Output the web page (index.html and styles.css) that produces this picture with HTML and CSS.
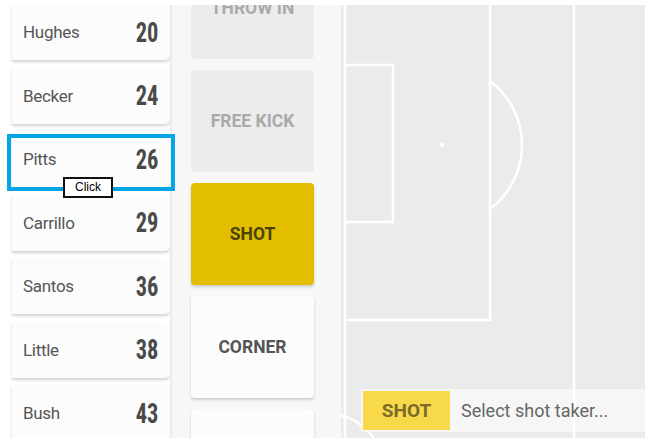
FILE: index.html
```html
<!DOCTYPE html>
<html lang="en">
<head>
    <meta charset="UTF-8">
    <meta name="viewport" content="width=device-width, initial-scale=1.0">
    <title>Shot taker</title>

    <link rel="stylesheet" href="styles.css">
</head>
<body>
    <div class="topbar"></div>
    <div class="main">
        <div class="players">
            <div class="player"><span class="name">Hughes</span><span class="num">20</span></div>
            <div class="player"><span class="name">Becker</span><span class="num">24</span></div>
            <div class="player"><span class="name">Pitts</span><span class="num">26</span></div>
            <div class="player"><span class="name">Carrillo</span><span class="num">29</span></div>
            <div class="player"><span class="name">Santos</span><span class="num">36</span></div>
            <div class="player"><span class="name">Little</span><span class="num">38</span></div>
            <div class="player"><span class="name">Bush</span><span class="num">43</span></div>
        </div>

        <div class="actions">
            <div class="action off">THROW IN</div>
            <div class="action off">FREE KICK</div>
            <div class="action active">SHOT</div>
            <div class="action">CORNER</div>
            <div class="action"></div>
        </div>

        <div class="pitch">
            <svg class="lines" width="304" height="433" viewBox="0 0 304 433">
                <g fill="none" stroke="#fff" stroke-width="2.5">
                    <line x1="4" y1="0" x2="4" y2="433"/>
                    <path d="M4 60 H52 V217 H4"/>
                    <path d="M149 0 V315 H4"/>
                    <path d="M149 76 A80 80 0 0 1 149 204"/>
                    <line x1="233" y1="0" x2="233" y2="433"/>
                    <circle cx="-13" cy="464" r="55"/>
                </g>
                <circle cx="101" cy="140" r="2.2" fill="#fff"/>
            </svg>

            <div class="taker">
                <div class="chip">SHOT</div>
                <div class="hint">Select shot taker...</div>
            </div>
        </div>

        <!-- highlight on the selected player -->
        <div class="focus"></div>
        <div class="tip">Click</div>
    </div>
</body>
</html>
```

FILE: styles.css
```css
html, body {
    margin: 0;
    padding: 0;
}

body {
    width: 645px;
    height: 438px;
    overflow: hidden;
    background-color: #ffffff;
    font-family: Roboto, 'Liberation Sans', sans-serif;
}

.topbar {
    position: relative;
    z-index: 2;
    height: 5px;
    background-color: #ffffff;
}

.main {
    position: relative;
    display: flex;
    height: 433px;
}

/* players list */
.players {
    width: 158px;
    padding-left: 12px;
    display: flex;
    flex-direction: column;
    gap: 7.5px;
    overflow: hidden;
    background-color: #ffffff;
}

.player {
    flex: none;
    height: 56px;
    display: flex;
    align-items: center;
    justify-content: space-between;
    padding: 0 12px 0 11px;
    background-color: #fcfcfc;
    border-radius: 0 5px 5px 0;
    box-shadow: 0 2px 3px rgba(0, 0, 0, 0.18);
}

.player:first-child {
    margin-top: -1px;
}

.name {
    font-size: 17px;
    color: #555555;
    letter-spacing: -0.3px;
}

.num {
    display: inline-block;
    font-family: 'Roboto Condensed', 'Liberation Sans Narrow', 'DejaVu Sans Condensed', sans-serif;
    font-weight: bold;
    font-size: 28px;
    color: #4a4a4a;
    transform: scaleX(0.8);
    transform-origin: right center;
}

/* action buttons */
.actions {
    width: 150px;
    padding-left: 19px;
    border-left: 2px solid #ebebeb;
    background-color: #f7f7f7;
    display: flex;
    flex-direction: column;
    gap: 11px;
    overflow: hidden;
}

.action {
    flex: none;
    width: 123px;
    height: 102px;
    display: flex;
    align-items: center;
    justify-content: center;
    border-radius: 4px;
    background-color: #fcfcfc;
    box-shadow: 0 2px 3px rgba(0, 0, 0, 0.18);
    font-weight: bold;
    font-size: 17.5px;
    color: #555555;
}

.action:first-child {
    margin-top: -48px;
}

.action.off {
    background-color: #ececec;
    box-shadow: none;
    color: #aaaaaa;
}

.action.active {
    background-color: #e2bd00;
    color: #4b4200;
}

/* pitch */
.pitch {
    position: relative;
    flex: 1;
    background-color: #ebebeb;
    overflow: hidden;
}

.lines {
    display: block;
}

.taker {
    position: absolute;
    left: 20px;
    right: 0;
    top: 384px;
    height: 43px;
    box-sizing: border-box;
    padding: 2px;
    display: flex;
    align-items: center;
    background-color: rgba(255, 255, 255, 0.55);
}

.chip {
    width: 87px;
    height: 39px;
    display: flex;
    align-items: center;
    justify-content: center;
    background-color: #f8d949;
    color: #7b6b2a;
    font-weight: bold;
    font-size: 19px;
}

.hint {
    margin-left: 11px;
    font-size: 18px;
    color: #666666;
}

.focus {
    position: absolute;
    left: 7px;
    top: 129px;
    width: 160px;
    height: 49px;
    border: 4px solid #06a5e6;
}

.tip {
    position: absolute;
    left: 63px;
    top: 172px;
    width: 50px;
    height: 21px;
    box-sizing: border-box;
    border: 2px solid #111111;
    background-color: #ffffff;
    font-family: 'Liberation Sans', Arial, sans-serif;
    font-size: 12px;
    line-height: 17px;
    text-align: center;
    color: #000000;
}
```
